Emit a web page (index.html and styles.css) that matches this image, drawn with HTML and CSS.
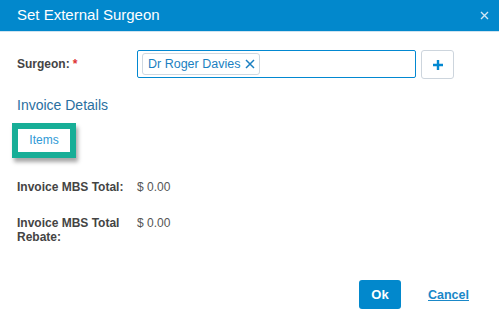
FILE: index.html
```html
<!DOCTYPE html>
<html lang="en">
<head>
    <meta charset="UTF-8">
    <title>Set External Surgeon</title>
    <link rel="stylesheet" href="styles.css">
</head>
<body>
    <div class="dialog">
        <div class="dialog-header">
            <h1>Set External Surgeon</h1>
            <span class="close">
                <svg width="9" height="9" viewBox="0 0 9 9"><path d="M1 1L8 8M8 1L1 8" stroke="#cfe6f5" stroke-width="1.4"/></svg>
            </span>
        </div>

        <div class="dialog-body">
            <div class="form-row surgeon-row">
                <label class="label">Surgeon:<span class="req">*</span></label>
                <div class="picker">
                    <span class="chip">Dr Roger Davies
                        <svg width="10" height="10" viewBox="0 0 10 10"><path d="M1 1L9 9M9 1L1 9" stroke="#1a7fc1" stroke-width="1.5"/></svg>
                    </span>
                </div>
                <button class="add-btn">
                    <svg width="12" height="12" viewBox="0 0 12 12"><path d="M6 1V11M1 6H11" stroke="#0288d1" stroke-width="2.4"/></svg>
                </button>
            </div>

            <h2 class="section-title">Invoice Details</h2>

            <div class="tabs">
                <span class="tab">Items</span>
            </div>

            <div class="form-row total-row">
                <span class="label">Invoice MBS Total:</span>
                <span class="value">$ 0.00</span>
            </div>
            <div class="form-row total-row">
                <span class="label">Invoice MBS Total Rebate:</span>
                <span class="value">$ 0.00</span>
            </div>
        </div>

        <div class="dialog-footer">
            <button class="ok-btn">Ok</button>
            <a class="cancel" href="#">Cancel</a>
        </div>
    </div>
</body>
</html>
```

FILE: styles.css
```css
* {
    margin: 0;
    padding: 0;
    box-sizing: border-box;
}

body {
    font-family: Arial, "Liberation Sans", sans-serif;
    font-size: 12px;
    background-color: #fff;
    color: #444;
    width: 499px;
    height: 319px;
    overflow: hidden;
}

.dialog-header {
    height: 32px;
    background-color: #0288cc;
    border-bottom: 1px solid #cfe3f0;
    display: flex;
    align-items: center;
    justify-content: space-between;
    padding: 0 10px 2px 17px;
}

.dialog-header h1 {
    font-size: 15px;
    font-weight: normal;
    color: #fff;
}

.close {
    display: flex;
    margin-top: 1px;
}

.dialog-body {
    padding: 18px 17px 0 17px;
}

.form-row {
    display: flex;
}

.label {
    width: 120px;
    font-weight: bold;
    color: #444;
}

.req {
    color: #d33;
    margin-left: 3px;
}

.surgeon-row {
    align-items: flex-start;
}

.surgeon-row .label {
    padding-top: 7px;
}

.picker {
    width: 279px;
    height: 28px;
    border: 1px solid #0288d1;
    border-radius: 2px;
    padding: 2px 4px;
}

.chip {
    display: inline-flex;
    align-items: center;
    gap: 5px;
    height: 22px;
    padding: 0 4px 0 5px;
    border: 1px solid #cfd8e0;
    border-radius: 3px;
    color: #1a7fc1;
    font-size: 12.5px;
}

.add-btn {
    width: 33px;
    height: 29px;
    margin-left: 5px;
    background: #fff;
    border: 1px solid #cdd5dd;
    border-radius: 3px;
    display: flex;
    align-items: center;
    justify-content: center;
}

.section-title {
    font-size: 14px;
    font-weight: normal;
    color: #2a6f9f;
    margin-top: 18px;
}

.tabs {
    margin: 10px 0 0 -5px;
    height: 44px;
}

.tab {
    display: inline-block;
    width: 64px;
    height: 35px;
    border: 6px solid #17ae97;
    box-shadow: 2px 4px 4px rgba(0, 0, 0, 0.35);
    text-align: center;
    line-height: 23px;
    color: #2f9ad6;
}

.total-row {
    margin-top: 13px;
}

.total-row + .total-row {
    margin-top: 22px;
}

.value {
    color: #555;
}

.dialog-footer {
    display: flex;
    align-items: center;
    justify-content: flex-end;
    gap: 27px;
    padding: 0 30px 0 0;
    margin-top: 36px;
}

.ok-btn {
    width: 42px;
    height: 29px;
    background-color: #0288cc;
    color: #fff;
    border: none;
    border-radius: 3px;
    font-family: Arial, "Liberation Sans", sans-serif;
    font-size: 13px;
    font-weight: bold;
}

.cancel {
    color: #1a88c8;
    font-weight: bold;
    font-size: 12.5px;
}
```
